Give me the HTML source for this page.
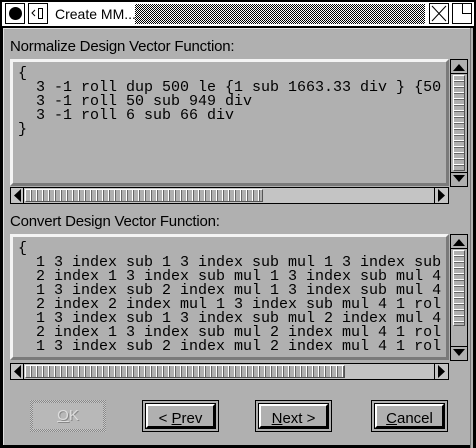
<!DOCTYPE html>
<html><head><style>
*{margin:0;padding:0;box-sizing:border-box}
body{width:476px;height:448px;background:#000;position:relative;overflow:hidden;font-family:"Liberation Sans",sans-serif}
.a{position:absolute}
.title{left:0;top:0;width:476px;height:26px;background:#fff;border:2px solid #000;border-bottom:none}
.stip{left:135px;top:4px;width:290px;height:20px;background-image:repeating-conic-gradient(#000 0 25%,#fff 0 50%);background-size:2px 2px}
.tb{top:3px;width:20px;height:21px;border:1px solid #000;background:#fff}
.body{left:3px;top:28px;width:468px;height:417px;background:#b0b0b0;border-top:1px solid #e0e0e0;border-left:1px solid #e0e0e0}
.rb{left:470px;top:28px;width:3px;height:420px;background:#b0b0b0;border-left:1px solid #777}
.lbl{font-size:15px;color:#000;letter-spacing:-0.2px}
.txt{background:#b0b0b0;border-top:3px solid #f4f4f4;border-left:3px solid #f4f4f4;border-right:3px solid #7a7a7a;border-bottom:3px solid #7a7a7a;font-family:"Liberation Mono",monospace;font-size:15px;line-height:14px;white-space:pre;overflow:hidden;padding:5px 0 0 5px;color:#000}
.vs{width:18px;background:#b0b0b0;border:1px solid #000}
.hs{height:17px;background:#c4c4c4;border:1px solid #000}
.ridgeh{background:repeating-linear-gradient(90deg,#b0b0b0 0 4px,#fff 4px 5px,#666 5px 6px);border:1px solid #fff;border-right-color:#555;border-bottom-color:#555}
.ridgev{background:repeating-linear-gradient(180deg,#b0b0b0 0 4px,#fff 4px 5px,#666 5px 6px);border:1px solid #fff;border-right-color:#555;border-bottom-color:#555}
.btn{top:400px;width:77px;height:32px;border:1px solid #000;background:#b0b0b0;font-size:15px;text-align:center}
.btn i{position:absolute;left:3px;top:3px;right:3px;bottom:3px;border:2px solid #000;border-top-color:#000;font-style:normal;line-height:25px;border-top:2px solid #fff;border-left:2px solid #fff;outline:1px solid #000}
</style></head><body>
<div class="a title"></div>
<div class="a tb" style="left:5px"><div class="a" style="left:3px;top:3px;width:13px;height:13px;border-radius:50%;background:#000"></div></div>
<div class="a tb" style="left:28px"><svg width="18" height="19" style="position:absolute;left:0;top:0"><path d="M6 6 L3 9 L6 12" stroke="#000" fill="none"/><rect x="9.5" y="4.5" width="4" height="10" stroke="#000" fill="none"/></svg></div>
<div class="a" style="left:55px;top:6px;font-size:14px">Create MM...</div>
<div class="a stip"></div>
<div class="a tb" style="left:429px"><svg width="18" height="19" style="position:absolute;left:0;top:0"><path d="M2 2 L16 17 M16 2 L2 17" stroke="#000"/></svg></div>
<div class="a tb" style="left:452px"><svg width="18" height="19" style="position:absolute;left:0;top:0"><path d="M9.5 0 V9.5 H18" stroke="#000" fill="none"/></svg></div>
<div class="a body"></div>
<div class="a rb"></div>

<div class="a lbl" style="left:10px;top:38px">Normalize Design Vector Function:</div>
<div class="a txt" style="left:10px;top:59px;width:439px;height:127px">{
  3 -1 roll dup 500 le {1 sub 1663.33 div } {50
  3 -1 roll 50 sub 949 div
  3 -1 roll 6 sub 66 div
}</div>
<div class="a vs" style="left:450px;top:59px;height:128px">
 <svg width="16" height="14" class="a" style="left:0;top:0"><path d="M2 11 L8 4 L14 11Z" fill="#000"/><path d="M0 13.5H16" stroke="#000"/></svg>
 <div class="a ridgev" style="left:2px;top:15px;width:12px;height:96px"></div>
 <svg width="16" height="14" class="a" style="left:0;top:112px"><path d="M0 0.5H16" stroke="#000"/><path d="M2 3 L8 10 L14 3Z" fill="#000"/></svg>
</div>
<div class="a hs" style="left:10px;top:187px;width:439px">
 <svg width="14" height="15" class="a" style="left:0;top:0"><path d="M10 1 L3 7.5 L10 14Z" fill="#000"/><path d="M12.5 0V15" stroke="#000"/></svg>
 <div class="a ridgeh" style="left:14px;top:1px;width:238px;height:13px"></div>
 <svg width="14" height="15" class="a" style="left:423px;top:0"><path d="M0.5 0V15" stroke="#000"/><path d="M4 1 L11 7.5 L4 14Z" fill="#000"/></svg>
</div>

<div class="a lbl" style="left:10px;top:213px">Convert Design Vector Function:</div>
<div class="a txt" style="left:10px;top:234px;width:439px;height:126px">{
  1 3 index sub 1 3 index sub mul 1 3 index sub
  2 index 1 3 index sub mul 1 3 index sub mul 4
  1 3 index sub 2 index mul 1 3 index sub mul 4
  2 index 2 index mul 1 3 index sub mul 4 1 rol
  1 3 index sub 1 3 index sub mul 2 index mul 4
  2 index 1 3 index sub mul 2 index mul 4 1 rol
  1 3 index sub 2 index mul 2 index mul 4 1 rol</div>
<div class="a vs" style="left:450px;top:234px;height:127px">
 <svg width="16" height="14" class="a" style="left:0;top:0"><path d="M2 11 L8 4 L14 11Z" fill="#000"/><path d="M0 13.5H16" stroke="#000"/></svg>
 <div class="a ridgev" style="left:2px;top:15px;width:12px;height:76px"></div>
 <svg width="16" height="14" class="a" style="left:0;top:111px"><path d="M0 0.5H16" stroke="#000"/><path d="M2 3 L8 10 L14 3Z" fill="#000"/></svg>
</div>
<div class="a hs" style="left:10px;top:363px;width:439px">
 <svg width="14" height="15" class="a" style="left:0;top:0"><path d="M10 1 L3 7.5 L10 14Z" fill="#000"/><path d="M12.5 0V15" stroke="#000"/></svg>
 <div class="a ridgeh" style="left:14px;top:1px;width:320px;height:13px"></div>
 <svg width="14" height="15" class="a" style="left:423px;top:0"><path d="M0.5 0V15" stroke="#000"/><path d="M4 1 L11 7.5 L4 14Z" fill="#000"/></svg>
</div>

<div class="a" style="left:30px;top:400px;width:76px;height:32px;background-image:repeating-conic-gradient(#888 0 25%,#c8c8c8 0 50%);background-size:2px 2px">
 <div class="a" style="left:3px;top:3px;right:3px;bottom:3px;background:#b8b8b8;text-align:center;line-height:26px;font-size:15px;color:#ddd;text-shadow:1px 1px 0 #888"><u>O</u>K</div>
</div>
<div class="a btn" style="left:142px"><i>&lt; <u>P</u>rev</i></div>
<div class="a btn" style="left:255px"><i><u>N</u>ext &gt;</i></div>
<div class="a btn" style="left:371px"><i><u>C</u>ancel</i></div>
</body></html>
